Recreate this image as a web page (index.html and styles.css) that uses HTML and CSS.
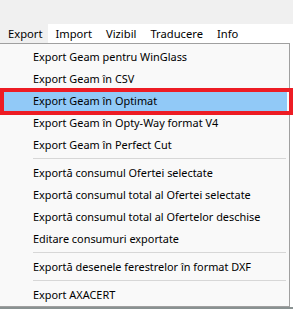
FILE: index.html
```html
<!DOCTYPE html>
<html>
<head>
<meta charset="utf-8">
<link rel="stylesheet" href="styles.css">
</head>
<body>
<div class="topbar"></div>
<div class="menubar">
  <span class="mb-item active">Export</span>
  <span class="mb-item">Import</span>
  <span class="mb-item">Vizibil</span>
  <span class="mb-item">Traducere</span>
  <span class="mb-item">Info</span>
</div>
<div class="stage">
  <div class="menu">
    <div class="item">Export Geam pentru WinGlass</div>
    <div class="item">Export Geam în CSV</div>
    <div class="item hl">Export Geam în Optimat<span class="mark"></span></div>
    <div class="item">Export Geam în Opty-Way format V4</div>
    <div class="item">Export Geam în Perfect Cut</div>
    <div class="sep"></div>
    <div class="item">Exportă consumul Ofertei selectate</div>
    <div class="item">Exportă consumul total al Ofertei selectate</div>
    <div class="item">Exportă consumul total al Ofertelor deschise</div>
    <div class="item">Editare consumuri exportate</div>
    <div class="sep"></div>
    <div class="item">Exportă desenele ferestrelor în format DXF</div>
    <div class="sep"></div>
    <div class="item">Export AXACERT</div>
  </div>
  <div class="shadow"></div>
</div>
</body>
</html>
```
FILE: styles.css
```css
html, body {
  margin: 0;
  padding: 0;
  background: #f0f0f0;
  width: 293px;
  height: 312px;
  overflow: hidden;
  font-family: "Noto Sans", "Open Sans", sans-serif;
  font-size: 11px;
  color: #000;
}
.topbar {
  height: 24px;
  background: #f0f0f0;
}
.menubar {
  height: 19px;
  background: #ffffff;
  display: flex;
  align-items: stretch;
}
.mb-item {
  display: flex;
  align-items: center;
  padding: 0 7px;
  line-height: 19px;
  font-size: 11.2px;
}
.mb-item.active {
  background: #f0f0f0;
  padding-left: 8px;
  padding-right: 6px;
}
.stage {
  position: relative;
  height: 269px;
  background: #ffffff;
}
.menu {
  position: relative;
  z-index: 1;
  margin-left: -1px;
  width: 291px;
  height: 264px;
  box-sizing: border-box;
  border: 1px solid #a0a0a0;
  background: #f9f9f9;
  padding: 2px 2px;
}
.item {
  position: relative;
  height: 22px;
  line-height: 22px;
  padding-left: 31px;
  white-space: nowrap;
  font-size: 10.9px;
}
.item.hl {
  background: #91c9f7;
}
.mark {
  position: absolute;
  left: -2px;
  top: -2px;
  width: 293px;
  height: 27px;
  box-sizing: border-box;
  border: 4px solid #ed1c24;
}
.sep {
  height: 6px;
  position: relative;
}
.sep::after {
  content: "";
  position: absolute;
  left: 31px;
  right: 1px;
  top: 2px;
  height: 1px;
  background: #d7d7d7;
}
.shadow {
  height: 2px;
  width: 293px;
  background: #8a9292;
}
```
